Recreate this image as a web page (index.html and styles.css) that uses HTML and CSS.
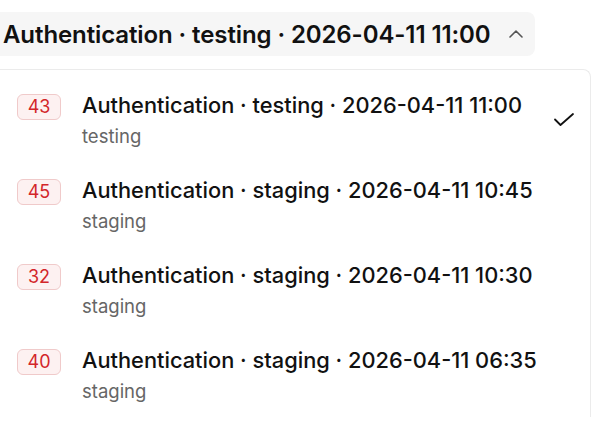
FILE: index.html
```html
<!DOCTYPE html>
<html lang="en">
<head>
  <meta charset="UTF-8">
  <meta name="viewport" content="width=device-width, initial-scale=1.0">
  <title>Run picker</title>
  <link rel="stylesheet" href="styles.css">
</head>
<body>

<div class="picker">
  <button class="trigger">
    <span class="trigger-label">Authentication · testing · 2026-04-11 11:00</span>
    <svg class="chevron" width="14" height="8" viewBox="0 0 14 8" fill="none" stroke="#555" stroke-width="1.6" stroke-linecap="round" stroke-linejoin="round">
      <path d="M1 7l6-6 6 6"/>
    </svg>
  </button>

  <ul class="menu">
    <li class="item">
      <span class="badge">43</span>
      <div class="item-text">
        <div class="item-title">Authentication · testing · 2026-04-11 11:00</div>
        <div class="item-sub">testing</div>
      </div>
      <svg class="check" width="22" height="15" viewBox="0 0 22 15" fill="none" stroke="#111" stroke-width="1.8" stroke-linecap="round" stroke-linejoin="round">
        <path d="M2 7.5l5.5 5.5L20 2"/>
      </svg>
    </li>
    <li class="item">
      <span class="badge">45</span>
      <div class="item-text">
        <div class="item-title">Authentication · staging · 2026-04-11 10:45</div>
        <div class="item-sub">staging</div>
      </div>
    </li>
    <li class="item">
      <span class="badge">32</span>
      <div class="item-text">
        <div class="item-title">Authentication · staging · 2026-04-11 10:30</div>
        <div class="item-sub">staging</div>
      </div>
    </li>
    <li class="item">
      <span class="badge">40</span>
      <div class="item-text">
        <div class="item-title">Authentication · staging · 2026-04-11 06:35</div>
        <div class="item-sub">staging</div>
      </div>
    </li>
  </ul>
</div>

</body>
</html>
```

FILE: styles.css
```css
/* General Styles */
body {
  margin: 0;
  padding: 0;
  background-color: #fff;
  color: #111;
  font-family: Inter, "Noto Sans", sans-serif;
  overflow: hidden;
}
.picker {
  padding-top: 12px;
}
.trigger {
  display: flex;
  align-items: center;
  height: 44px;
  padding: 0 12px 0 3px;
  border: none;
  border-radius: 0 8px 8px 0;
  background-color: #f6f6f6;
  font-family: inherit;
  color: #111;
  cursor: pointer;
}
.trigger-label {
  font-size: 24px;
  font-weight: 600;
  letter-spacing: -0.1px;
}
.chevron {
  margin-left: 18px;
}
.menu {
  list-style: none;
  margin: 13px 2px 0 -10px;
  padding: 7px 0 0;
  border: 1px solid #ebebeb;
  border-bottom: none;
  border-radius: 8px 8px 0 0;
}
.item {
  display: flex;
  align-items: flex-start;
  padding: 15px 15px 15px 26px;
}
.badge {
  width: 42px;
  height: 24px;
  margin-top: 2px;
  border: 1px solid #f0caca;
  border-radius: 6px;
  background-color: #fdf1f1;
  color: #d3262a;
  font-size: 18px;
  line-height: 24px;
  text-align: center;
}
.item-text {
  flex: 1;
  margin-left: 21px;
}
.item-title {
  font-size: 21.8px;
  line-height: 26px;
  font-weight: 500;
}
.item-sub {
  margin-top: 7px;
  font-size: 18.5px;
  line-height: 22px;
  color: #666;
}
.check {
  align-self: center;
}
```
